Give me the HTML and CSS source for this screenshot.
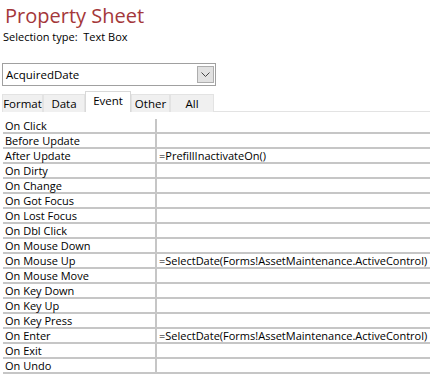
FILE: index.html
```html
<!DOCTYPE html>
<html>
  <head>
    <title>Property Sheet</title>
    <link rel="stylesheet" href="styles.css">
  </head>
  <body>
    <div class="property-sheet">
      <h1 class="sheet-title">Property Sheet</h1>
      <div class="selection-type">Selection type:&nbsp; Text Box</div>

      <div class="control-select">
        <span class="control-name">AcquiredDate</span>
        <button class="select-btn">
          <svg width="9" height="5" viewBox="0 0 9 5"><path d="M0.5 0.5 L4.5 4.5 L8.5 0.5" fill="none" stroke="#444" stroke-width="1"/></svg>
        </button>
      </div>

      <div class="tabs">
        <div class="tab tab-format">Format</div>
        <div class="tab tab-data">Data</div>
        <div class="tab tab-event tab-active">Event</div>
        <div class="tab tab-other">Other</div>
        <div class="tab tab-all">All</div>
        <div class="tab-rest"></div>
      </div>

      <div class="props">
        <div class="prop-row"><div class="prop-name">On Click</div><div class="prop-value"></div></div>
        <div class="prop-row"><div class="prop-name">Before Update</div><div class="prop-value"></div></div>
        <div class="prop-row"><div class="prop-name">After Update</div><div class="prop-value">=PrefillInactivateOn()</div></div>
        <div class="prop-row"><div class="prop-name">On Dirty</div><div class="prop-value"></div></div>
        <div class="prop-row"><div class="prop-name">On Change</div><div class="prop-value"></div></div>
        <div class="prop-row"><div class="prop-name">On Got Focus</div><div class="prop-value"></div></div>
        <div class="prop-row"><div class="prop-name">On Lost Focus</div><div class="prop-value"></div></div>
        <div class="prop-row"><div class="prop-name">On Dbl Click</div><div class="prop-value"></div></div>
        <div class="prop-row"><div class="prop-name">On Mouse Down</div><div class="prop-value"></div></div>
        <div class="prop-row"><div class="prop-name">On Mouse Up</div><div class="prop-value">=SelectDate(Forms!AssetMaintenance.ActiveControl)</div></div>
        <div class="prop-row"><div class="prop-name">On Mouse Move</div><div class="prop-value"></div></div>
        <div class="prop-row"><div class="prop-name">On Key Down</div><div class="prop-value"></div></div>
        <div class="prop-row"><div class="prop-name">On Key Up</div><div class="prop-value"></div></div>
        <div class="prop-row"><div class="prop-name">On Key Press</div><div class="prop-value"></div></div>
        <div class="prop-row"><div class="prop-name">On Enter</div><div class="prop-value">=SelectDate(Forms!AssetMaintenance.ActiveControl)</div></div>
        <div class="prop-row"><div class="prop-name">On Exit</div><div class="prop-value"></div></div>
        <div class="prop-row"><div class="prop-name">On Undo</div><div class="prop-value"></div></div>
      </div>
    </div>
  </body>
</html>
```

FILE: styles.css
```css
body {
  margin: 0;
  background-color: #fff;
  font-family: "Open Sans", "Noto Sans", sans-serif;
  color: #000;
}
.property-sheet {
  padding: 0 3px 0 2px;
}
.sheet-title {
  margin: 0;
  padding: 2px 0 0 3px;
  font-size: 20px;
  font-weight: 400;
  line-height: 28px;
  color: #a4373a;
}
.selection-type {
  padding-left: 1px;
  font-size: 11px;
  line-height: 14px;
}

.control-select {
  display: flex;
  align-items: center;
  justify-content: space-between;
  width: 214px;
  height: 23px;
  box-sizing: border-box;
  margin-top: 19px;
  border: 1px solid #a0a0a0;
  background-color: #fff;
  padding: 0 1px 0 3px;
}
.control-name {
  font-size: 11.5px;
}
.select-btn {
  display: flex;
  align-items: center;
  justify-content: center;
  width: 17px;
  height: 17px;
  padding: 0;
  border: 1px solid #adadad;
  background-color: #e1e1e1;
}

.tabs {
  display: flex;
  align-items: flex-end;
  height: 21px;
  margin-top: 5px;
}
.tab {
  height: 18px;
  box-sizing: border-box;
  border: 1px solid #e3e3e3;
  border-bottom: none;
  background-color: #f0f0f0;
  font-size: 11.5px;
  line-height: 17px;
  text-align: center;
}
.tab-format { width: 41px; }
.tab-data { width: 42px; }
.tab-event { width: 46px; }
.tab-other { width: 39px; }
.tab-all { width: 44px; }
.tab-active {
  height: 21px;
  background-color: #fff;
  border-color: #d9d9d9;
  line-height: 18px;
}
.tab-rest {
  flex: 1;
  border-bottom: 1px solid #e3e3e3;
}

.props {
  margin-top: 7px;
  padding-left: 1px;
}
.prop-row {
  display: flex;
  height: 15px;
  box-sizing: border-box;
  border-bottom: 2px solid #c6c6c6;
  font-size: 11px;
  line-height: 14px;
}
.prop-name {
  flex-shrink: 0;
  width: 150px;
  padding-left: 2px;
  border-right: 2px solid #c6c6c6;
  white-space: nowrap;
}
.prop-value {
  flex: 1;
  min-width: 0;
  overflow: hidden;
  padding-left: 2px;
  white-space: nowrap;
}
```
